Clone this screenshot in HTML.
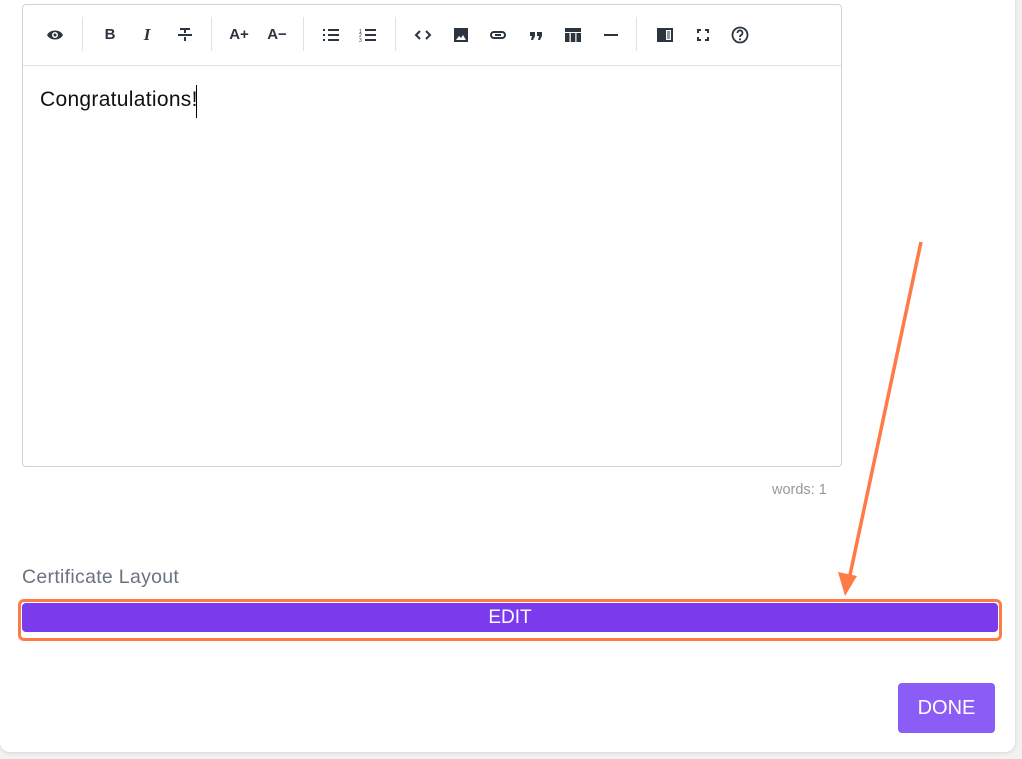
<!DOCTYPE html>
<html><head><style>
html,body{margin:0;padding:0;width:1022px;height:759px;overflow:hidden;background:#f2f2f3;font-family:"Liberation Sans",sans-serif}
.card{position:absolute;left:0;top:-10px;width:1015px;height:762px;background:#fff;border-radius:10px;box-shadow:0 1px 4px rgba(0,0,0,.12)}
.ed{position:absolute;left:22px;top:4px;width:818px;height:461px;border:1px solid #ced4da;border-radius:4px;background:#fff}
.tb{position:absolute;left:0;top:0;right:0;height:60px;border-bottom:1px solid #dee2e6}
.ic{position:absolute;top:20px;width:20px;height:20px;transform:translateX(-10px);color:#2c3440;font-weight:bold;font-size:15px;text-align:center;line-height:20px}
.sep{position:absolute;top:12px;width:1px;height:34px;background:#dfe1e4}
.txt{position:absolute;left:40px;top:88px;font-size:21px;color:#111;letter-spacing:0.3px}
.cur{position:absolute;left:196px;top:85px;width:1px;height:33px;background:#000}
.words{position:absolute;left:772px;top:482px;font-size:14.5px;color:#999}
.lbl{position:absolute;left:22px;top:566px;font-size:19.5px;color:#6b7280;letter-spacing:0.3px}
.edit{position:absolute;left:18px;top:599px;width:976px;height:34px;border:3px solid #ff7a45;border-radius:6px;background:#fff;padding:1px 1px 1px 1px}
.edit div{background:#7c3aed;height:29px;border-radius:4px;color:#fff;text-align:center;line-height:30px;font-size:19px}
.done{position:absolute;left:898px;top:683px;width:97px;height:50px;background:#8b5cf6;border-radius:4px;color:#fff;text-align:center;line-height:51px;font-size:20px}
svg.i{position:absolute;top:21px;transform:translateX(-9px)}
</style></head><body>
<div class="card"></div>
<div class="ed">
<div class="tb">
<svg class="i" style="left:32px" width="18" height="18" viewBox="0 0 18 18"><path d="M1 9C4 3 14 3 17 9C14 15 4 15 1 9Z" fill="#2c3440"/><circle cx="9" cy="9" r="3" fill="#fff"/><circle cx="9" cy="9" r="1.5" fill="#2c3440"/></svg>
<div class="sep" style="left:59px"></div>
<div class="ic" style="left:87px">B</div>
<div class="ic" style="left:124px;font-style:italic;font-family:'Liberation Serif',serif;font-size:17px">I</div>
<svg class="i" style="left:162px" width="18" height="18" viewBox="0 0 18 18"><path d="M4 3H14M9 3V7M2 9H16M9 11V15" stroke="#2c3440" stroke-width="2" fill="none"/></svg>
<div class="sep" style="left:188px"></div>
<div class="ic" style="left:216px;width:24px;transform:translateX(-12px)">A+</div>
<div class="ic" style="left:254px;width:24px;transform:translateX(-12px)">A−</div>
<div class="sep" style="left:280px"></div>
<svg class="i" style="left:308px" width="18" height="18" viewBox="0 0 18 18"><path d="M1 4h2M1 9h2M1 14h2M6 4h11M6 9h11M6 14h11" stroke="#2c3440" stroke-width="2"/></svg>
<svg class="i" style="left:345px" width="18" height="18" viewBox="0 0 18 18"><path d="M6 4h11M6 9h11M6 14h11" stroke="#2c3440" stroke-width="2"/><text x="0" y="7" font-size="5" fill="#2c3440">1</text><text x="0" y="11" font-size="5" fill="#2c3440">2</text><text x="0" y="16" font-size="5" fill="#2c3440">3</text></svg>
<div class="sep" style="left:372px"></div>
<svg class="i" style="left:400px" width="18" height="18" viewBox="0 0 18 18"><path d="M6 5L2 9L6 13M12 5L16 9L12 13" stroke="#2c3440" stroke-width="2" fill="none"/></svg>
<svg class="i" style="left:438px" width="18" height="18" viewBox="0 0 18 18"><rect x="2" y="2" width="14" height="14" fill="#2c3440"/><path d="M4 14L7 10L9 12L11 9L14 14Z" fill="#fff"/></svg>
<svg class="i" style="left:475px" width="18" height="18" viewBox="0 0 18 18"><rect x="2" y="6" width="14" height="6" rx="3" stroke="#2c3440" stroke-width="2" fill="none"/><path d="M6 9H12" stroke="#2c3440" stroke-width="2"/></svg>
<svg class="i" style="left:513px" width="18" height="18" viewBox="0 0 18 18"><path d="M3 6h5v4l-2 4h-2l1-4h-2zM10 6h5v4l-2 4h-2l1-4h-2z" fill="#2c3440"/></svg>
<svg class="i" style="left:550px" width="18" height="18" viewBox="0 0 18 18"><rect x="1" y="2" width="16" height="4" fill="#2c3440"/><rect x="1" y="7" width="4.5" height="9" fill="#2c3440"/><rect x="6.8" y="7" width="4.5" height="9" fill="#2c3440"/><rect x="12.5" y="7" width="4.5" height="9" fill="#2c3440"/></svg>
<svg class="i" style="left:588px" width="18" height="18" viewBox="0 0 18 18"><path d="M2 9H16" stroke="#2c3440" stroke-width="2"/></svg>
<div class="sep" style="left:613px"></div>
<svg class="i" style="left:642px" width="18" height="18" viewBox="0 0 18 18"><rect x="1" y="2" width="16" height="14" fill="#2c3440"/><rect x="10" y="4" width="5" height="10" fill="#fff"/><path d="M11 6h3M11 8h3M11 10h3M11 12h3" stroke="#2c3440" stroke-width="1"/></svg>
<svg class="i" style="left:680px" width="18" height="18" viewBox="0 0 18 18"><path d="M4 7V4H7M11 4H14V7M14 11V14H11M7 14H4V11" stroke="#2c3440" stroke-width="2" fill="none"/></svg>
<svg class="i" style="left:717px" width="18" height="18" viewBox="0 0 18 18"><circle cx="9" cy="9" r="7.5" stroke="#2c3440" stroke-width="1.8" fill="none"/><path d="M6.5 7a2.5 2.5 0 1 1 3.5 2.2c-.8.4-1 .9-1 1.8" stroke="#2c3440" stroke-width="1.8" fill="none"/><circle cx="9" cy="13.3" r="1.1" fill="#2c3440"/></svg>
</div>
</div>
<div class="txt">Congratulations!</div>
<div class="cur"></div>
<div class="words">words: 1</div>
<div class="lbl">Certificate Layout</div>
<div class="edit"><div>EDIT</div></div>
<div class="done">DONE</div>
<svg style="position:absolute;left:0;top:0" width="1022" height="759"><path d="M921 242L850 575" stroke="#ff7a45" stroke-width="3.5"/><path d="M838 572L845 596L857 576Z" fill="#ff7a45"/></svg>
</body></html>
